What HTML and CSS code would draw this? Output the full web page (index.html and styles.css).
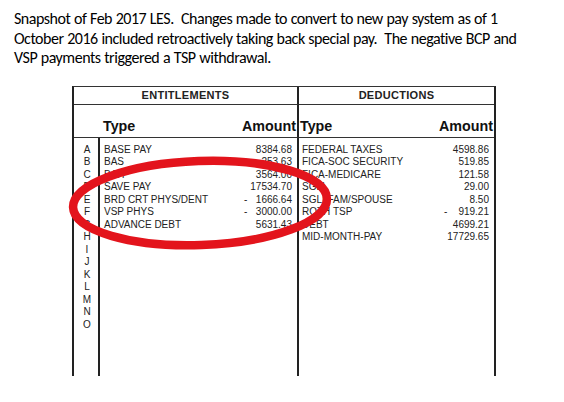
FILE: index.html
```html
<!DOCTYPE html>
<html>
<head>
<meta charset="utf-8">
<link rel="stylesheet" href="styles.css">
</head>
<body>
<div class="page">
  <p class="intro">Snapshot of Feb 2017 LES.&nbsp; Changes made to convert to new pay system as of 1<br>October 2016 included retroactively taking back special pay.&nbsp; The negative BCP and<br>VSP payments triggered a TSP withdrawal.</p>
  <div class="les">
    <div class="sec-head ent">ENTITLEMENTS</div>
    <div class="sec-head ded">DEDUCTIONS</div>
    <div class="col-head ent"><span>Type</span><span>Amount</span></div>
    <div class="col-head ded"><span>Type</span><span>Amount</span></div>
    <div class="letters">
      <div class="row">A</div><div class="row">B</div><div class="row">C</div><div class="row">D</div><div class="row">E</div><div class="row">F</div><div class="row">G</div><div class="row">H</div><div class="row">I</div><div class="row">J</div><div class="row">K</div><div class="row">L</div><div class="row">M</div><div class="row">N</div><div class="row">O</div>
    </div>
    <div class="items ent-items">
      <div class="row"><span>BASE PAY</span><span class="amt"><span></span>8384.68</span></div>
      <div class="row"><span>BAS</span><span class="amt"><span></span>253.63</span></div>
      <div class="row"><span>BAH</span><span class="amt"><span></span>3564.00</span></div>
      <div class="row"><span>SAVE PAY</span><span class="amt"><span></span>17534.70</span></div>
      <div class="row"><span>BRD CRT PHYS/DENT</span><span class="amt"><span>-</span>1666.64</span></div>
      <div class="row"><span>VSP PHYS</span><span class="amt"><span>-</span>3000.00</span></div>
      <div class="row"><span>ADVANCE DEBT</span><span class="amt"><span></span>5631.43</span></div>
    </div>
    <div class="items ded-items">
      <div class="row"><span>FEDERAL TAXES</span><span class="amt"><span></span>4598.86</span></div>
      <div class="row"><span>FICA-SOC SECURITY</span><span class="amt"><span></span>519.85</span></div>
      <div class="row"><span>FICA-MEDICARE</span><span class="amt"><span></span>121.58</span></div>
      <div class="row"><span>SGLI</span><span class="amt"><span></span>29.00</span></div>
      <div class="row"><span>SGLI FAM/SPOUSE</span><span class="amt"><span></span>8.50</span></div>
      <div class="row"><span>ROTH TSP</span><span class="amt"><span>-</span>919.21</span></div>
      <div class="row"><span>DEBT</span><span class="amt"><span></span>4699.21</span></div>
      <div class="row"><span>MID-MONTH-PAY</span><span class="amt"><span></span>17729.65</span></div>
    </div>
  </div>
  <svg class="circle" width="564" height="402" viewBox="0 0 564 402">
    <ellipse cx="200" cy="203" rx="127" ry="42" fill="none" stroke="#e3141c" stroke-width="8.5" transform="rotate(-2 200 203)"/>
  </svg>
</div>
</body>
</html>
```
FILE: styles.css
```css
html, body {
  margin: 0;
  padding: 0;
  background: #fff;
}
.page {
  width: 564px;
  height: 402px;
  position: relative;
}
.intro {
  margin: 0;
  padding: 9px 0 0 14px;
  font-family: Carlito, Lato, "Liberation Sans", sans-serif;
  font-size: 16px;
  line-height: 19.5px;
  letter-spacing: -0.48px;
  word-spacing: 0.5px;
  white-space: nowrap;
  color: #000;
}
.les {
  margin: 18px 0 0 72px;
  width: 424px;
  box-sizing: border-box;
  border-top: 1px solid #333;
  border-left: 2px solid #222;
  border-right: 2px solid #222;
  display: grid;
  grid-template-columns: 26px 199px 195px;
  grid-template-rows: 18px 33px 238px;
  font-family: "Liberation Sans", Arial, sans-serif;
  color: #222;
}
.sec-head {
  box-sizing: border-box;
  border-bottom: 1px solid #333;
  font-size: 11px;
  font-weight: bold;
  letter-spacing: 0.3px;
  text-align: center;
  line-height: 17px;
}
.sec-head.ent, .col-head.ent {
  grid-column: 1 / 3;
  border-right: 2px solid #222;
}
.col-head {
  box-sizing: border-box;
  border-bottom: 1px solid #333;
  display: flex;
  justify-content: space-between;
  align-items: flex-end;
  font-size: 14.3px;
  font-weight: bold;
  line-height: 16px;
  padding-bottom: 3px;
  color: #111;
}
.col-head.ent {
  padding-left: 29px;
  padding-right: 1px;
}
.col-head.ded {
  padding-left: 1px;
  padding-right: 1px;
}
.letters {
  box-sizing: border-box;
  border-right: 2px solid #222;
  padding-top: 6px;
  padding-left: 2px;
}
.items {
  box-sizing: border-box;
  padding-top: 6px;
}
.ent-items {
  border-right: 2px solid #222;
  padding-left: 4px;
  padding-right: 5px;
}
.ded-items {
  padding-left: 3px;
  padding-right: 5px;
}
.row {
  font-size: 10px;
  line-height: 12.5px;
  height: 12.5px;
  display: flex;
  justify-content: space-between;
}
.letters .row {
  justify-content: center;
}
.amt {
  width: 48px;
  display: flex;
  justify-content: space-between;
}
.ded-items .amt {
  width: 45px;
}
.circle {
  position: absolute;
  left: 0;
  top: 0;
  pointer-events: none;
}
```
